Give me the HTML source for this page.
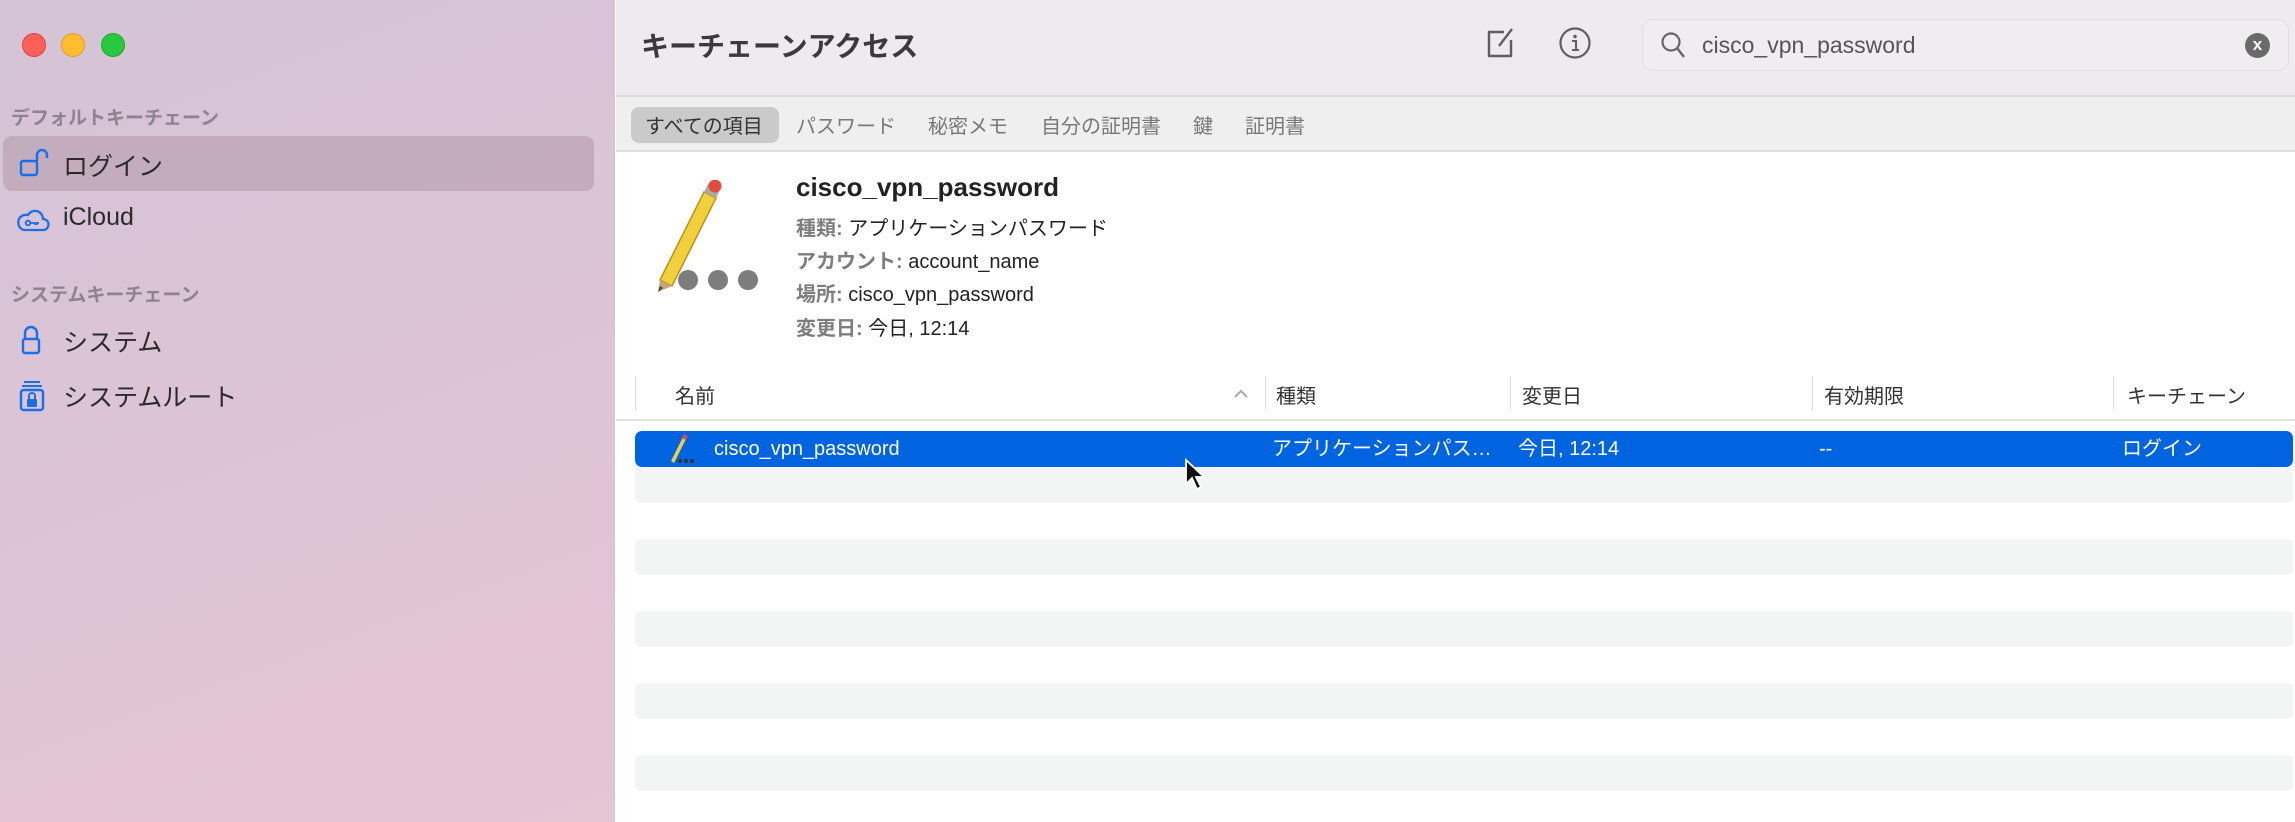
<!DOCTYPE html>
<html><head><meta charset="utf-8"><style>
*{margin:0;padding:0;box-sizing:border-box}
body{width:2295px;height:822px;overflow:hidden;font-family:"Liberation Sans","Noto Sans CJK JP",sans-serif;position:relative;background:#fff}
.abs{position:absolute;white-space:nowrap}
#side{position:absolute;left:0;top:0;width:615px;height:822px;background:linear-gradient(160deg,#d4c4d6 0%,#dcc4d6 50%,#e6c5d5 100%);border-right:1px solid #d2c7cf}
.dot{position:absolute;top:33px;width:24px;height:24px;border-radius:50%}
.sh{font-size:19px;color:#8e8290;font-weight:600}
.si{font-size:25px;color:#2a2a2a}
#top{position:absolute;left:616px;top:0;width:1679px;height:97px;background:#edebed;border-bottom:2px solid #dcdadc}
#tabs{position:absolute;left:616px;top:97px;width:1679px;height:55px;background:#f0eff0;border-bottom:2px solid #e0dfe0}
.tab{position:absolute;top:110px;font-size:20px;color:#7a777a}
.d{font-size:20px;color:#222}
.d b{color:#7d7d7d;font-weight:600}
.hd{font-size:20px;color:#333;top:380px}
.vl{position:absolute;top:376px;width:1px;height:34px;background:#dedede}
.stripe{position:absolute;left:635px;width:1658px;height:36px;background:#f3f4f4;border-radius:6px}
.rt{font-size:20px;color:#fff;top:431px;line-height:36px;height:36px}
</style></head><body>
<div id="side">
<div class="dot" style="left:22px;background:#fe5f57;border:1px solid #e0443e"></div>
<div class="dot" style="left:61px;background:#febc2e;border:1px solid #dea123"></div>
<div class="dot" style="left:101px;background:#28c840;border:1px solid #1aab29"></div>
<div class="abs sh" style="left:11px;top:103px">デフォルトキーチェーン</div>
<div style="position:absolute;left:3px;top:136px;width:591px;height:55px;border-radius:9px;background:rgba(150,120,140,0.32)"></div>
<svg class="abs" style="left:18px;top:148px" width="32" height="30" viewBox="0 0 32 30"><rect x="3" y="13" width="16" height="14" rx="2" fill="none" stroke="#1a6fe8" stroke-width="2.4"/><path d="M19 13 V7 a5 5 0 0 1 10 0 V10" fill="none" stroke="#1a6fe8" stroke-width="2.4"/></svg>
<div class="abs si" style="left:63px;top:147px">ログイン</div>
<svg class="abs" style="left:16px;top:205px" width="34" height="28" viewBox="0 0 34 28"><path d="M8 25 h19 a5.5 5.5 0 0 0 0-11 a8 8 0 0 0-15-4 a6.5 6.5 0 0 0-4 15z" fill="none" stroke="#1a6fe8" stroke-width="2.3"/><circle cx="12" cy="18" r="2.3" fill="none" stroke="#1a6fe8" stroke-width="1.8"/><path d="M14 18h9M21 18v2M19 18v2" stroke="#1a6fe8" stroke-width="1.8"/></svg>
<div class="abs si" style="left:63px;top:203px">iCloud</div>
<div class="abs sh" style="left:11px;top:280px">システムキーチェーン</div>
<svg class="abs" style="left:20px;top:325px" width="24" height="30" viewBox="0 0 24 30"><rect x="3" y="14" width="16" height="14" rx="2" fill="none" stroke="#1a6fe8" stroke-width="2.4"/><path d="M5 14 V8 a6 6 0 0 1 12 0 V14" fill="none" stroke="#1a6fe8" stroke-width="2.4"/></svg>
<div class="abs si" style="left:63px;top:323px">システム</div>
<svg class="abs" style="left:18px;top:380px" width="28" height="32" viewBox="0 0 28 32"><path d="M6 2h16M4 6h20" stroke="#1a6fe8" stroke-width="2"/><rect x="3" y="10" width="22" height="20" rx="2.5" fill="none" stroke="#1a6fe8" stroke-width="2.4"/><rect x="9" y="19" width="10" height="8" rx="1" fill="#1a6fe8"/><path d="M11 19v-3a3 3 0 0 1 6 0v3" fill="none" stroke="#1a6fe8" stroke-width="2"/></svg>
<div class="abs si" style="left:63px;top:378px">システムルート</div>
</div>

<div id="top"></div>
<div class="abs" style="left:641px;top:25px;font-size:28px;font-weight:600;color:#3a3a3a">キーチェーンアクセス</div>
<svg class="abs" style="left:1485px;top:26px" width="32" height="34" viewBox="0 0 32 34"><path d="M19 6H4v24h22V14" fill="none" stroke="#5f5f5f" stroke-width="2.4" stroke-linejoin="round"/><path d="M27 3L14 20" stroke="#5f5f5f" stroke-width="2.4"/></svg>
<svg class="abs" style="left:1558px;top:26px" width="34" height="34" viewBox="0 0 34 34"><circle cx="17" cy="17" r="14.5" fill="none" stroke="#5f5f5f" stroke-width="2.2"/><circle cx="17" cy="10.5" r="1.8" fill="#5f5f5f"/><path d="M14 15h4v9M14 24h7" fill="none" stroke="#5f5f5f" stroke-width="2"/></svg>
<div class="abs" style="left:1642px;top:19px;width:647px;height:52px;border:1.5px solid #e0dee0;border-radius:11px;background:#efedef"></div>
<svg class="abs" style="left:1660px;top:31px" width="28" height="30" viewBox="0 0 28 30"><circle cx="11" cy="11" r="8.5" fill="none" stroke="#666" stroke-width="2.2"/><path d="M17 17l7 9" stroke="#666" stroke-width="2.4"/></svg>
<div class="abs" style="left:1702px;top:32px;font-size:23px;color:#555">cisco_vpn_password</div>
<div class="abs" style="left:2245px;top:33px;width:25px;height:25px;border-radius:50%;background:#6a6a6a;color:#fff;font-size:17px;font-weight:bold;text-align:center;line-height:24px">x</div>

<div id="tabs"></div>
<div class="abs" style="left:631px;top:107px;width:148px;height:36px;border-radius:8px;background:#cbcacb"></div>
<div class="tab abs" style="left:645px;color:#333">すべての項目</div>
<div class="tab abs" style="left:796px">パスワード</div>
<div class="tab abs" style="left:928px">秘密メモ</div>
<div class="tab abs" style="left:1041px">自分の証明書</div>
<div class="tab abs" style="left:1193px">鍵</div>
<div class="tab abs" style="left:1245px">証明書</div>

<svg class="abs" style="left:648px;top:180px" width="116" height="116" viewBox="0 0 116 116">
<path d="M12 100 L56 12 L68 18 L24 106 Z" fill="#f2cf3c" stroke="#b89417" stroke-width="1.5"/>
<path d="M12 100 L24 106 L10 112 Z" fill="#c9a27a"/>
<path d="M10 112 L12 106 L15 108 Z" fill="#444"/>
<path d="M56 12 L68 18 L72 10 L60 4 Z" fill="#aaa"/>
<circle cx="67" cy="6" r="6.5" fill="#e24b3d"/>
<circle cx="40" cy="100" r="10" fill="#7d7d7d"/><circle cx="70" cy="100" r="10" fill="#7d7d7d"/><circle cx="100" cy="100" r="10" fill="#7d7d7d"/>
</svg>
<div class="abs" style="left:796px;top:172px;font-size:26px;font-weight:bold;color:#222">cisco_vpn_password</div>
<div class="abs d" style="left:796px;top:212px"><b>種類:</b> アプリケーションパスワード</div>
<div class="abs d" style="left:796px;top:245px"><b>アカウント:</b> account_name</div>
<div class="abs d" style="left:796px;top:278px"><b>場所:</b> cisco_vpn_password</div>
<div class="abs d" style="left:796px;top:312px"><b>変更日:</b> 今日, 12:14</div>

<div class="vl" style="left:635px"></div><div class="vl" style="left:1265px"></div><div class="vl" style="left:1510px"></div><div class="vl" style="left:1812px"></div><div class="vl" style="left:2113px"></div>
<div class="abs hd" style="left:675px">名前</div>
<svg class="abs" style="left:1233px;top:388px" width="16" height="12" viewBox="0 0 16 12"><path d="M2 9l6-6 6 6" fill="none" stroke="#aaa" stroke-width="2"/></svg>
<div class="abs hd" style="left:1276px">種類</div>
<div class="abs hd" style="left:1522px">変更日</div>
<div class="abs hd" style="left:1824px">有効期限</div>
<div class="abs hd" style="left:2127px">キーチェーン</div>
<div class="abs" style="left:616px;top:419px;width:1679px;height:2px;background:#e3e3e3"></div>

<div class="abs" style="left:635px;top:431px;width:1658px;height:36px;border-radius:7px;background:#0064e1"></div>
<svg class="abs" style="left:668px;top:433px" width="34" height="32" viewBox="0 0 34 32"><path d="M3 28 L15 4 L18 6 L6 30 Z" fill="#f2cf3c"/><circle cx="17" cy="4" r="2.5" fill="#e24b3d"/><circle cx="12" cy="28" r="2" fill="#333"/><circle cx="18" cy="28" r="2" fill="#333"/><circle cx="24" cy="28" r="2" fill="#333"/></svg>
<div class="abs rt" style="left:714px">cisco_vpn_password</div>
<div class="abs rt" style="left:1272px">アプリケーションパス…</div>
<div class="abs rt" style="left:1518px">今日, 12:14</div>
<div class="abs rt" style="left:1819px">--</div>
<div class="abs rt" style="left:2122px">ログイン</div>

<div class="stripe" style="top:467px"></div>
<div class="stripe" style="top:539px"></div>
<div class="stripe" style="top:611px"></div>
<div class="stripe" style="top:683px"></div>
<div class="stripe" style="top:755px"></div>

<svg class="abs" style="left:1184px;top:458px" width="24" height="36" viewBox="0 0 24 36"><path d="M2 2 L2 26 L8 20 L13 31 L17 29 L12 19 L20 19 Z" fill="#111" stroke="#fff" stroke-width="1.8"/></svg>
</body></html>
